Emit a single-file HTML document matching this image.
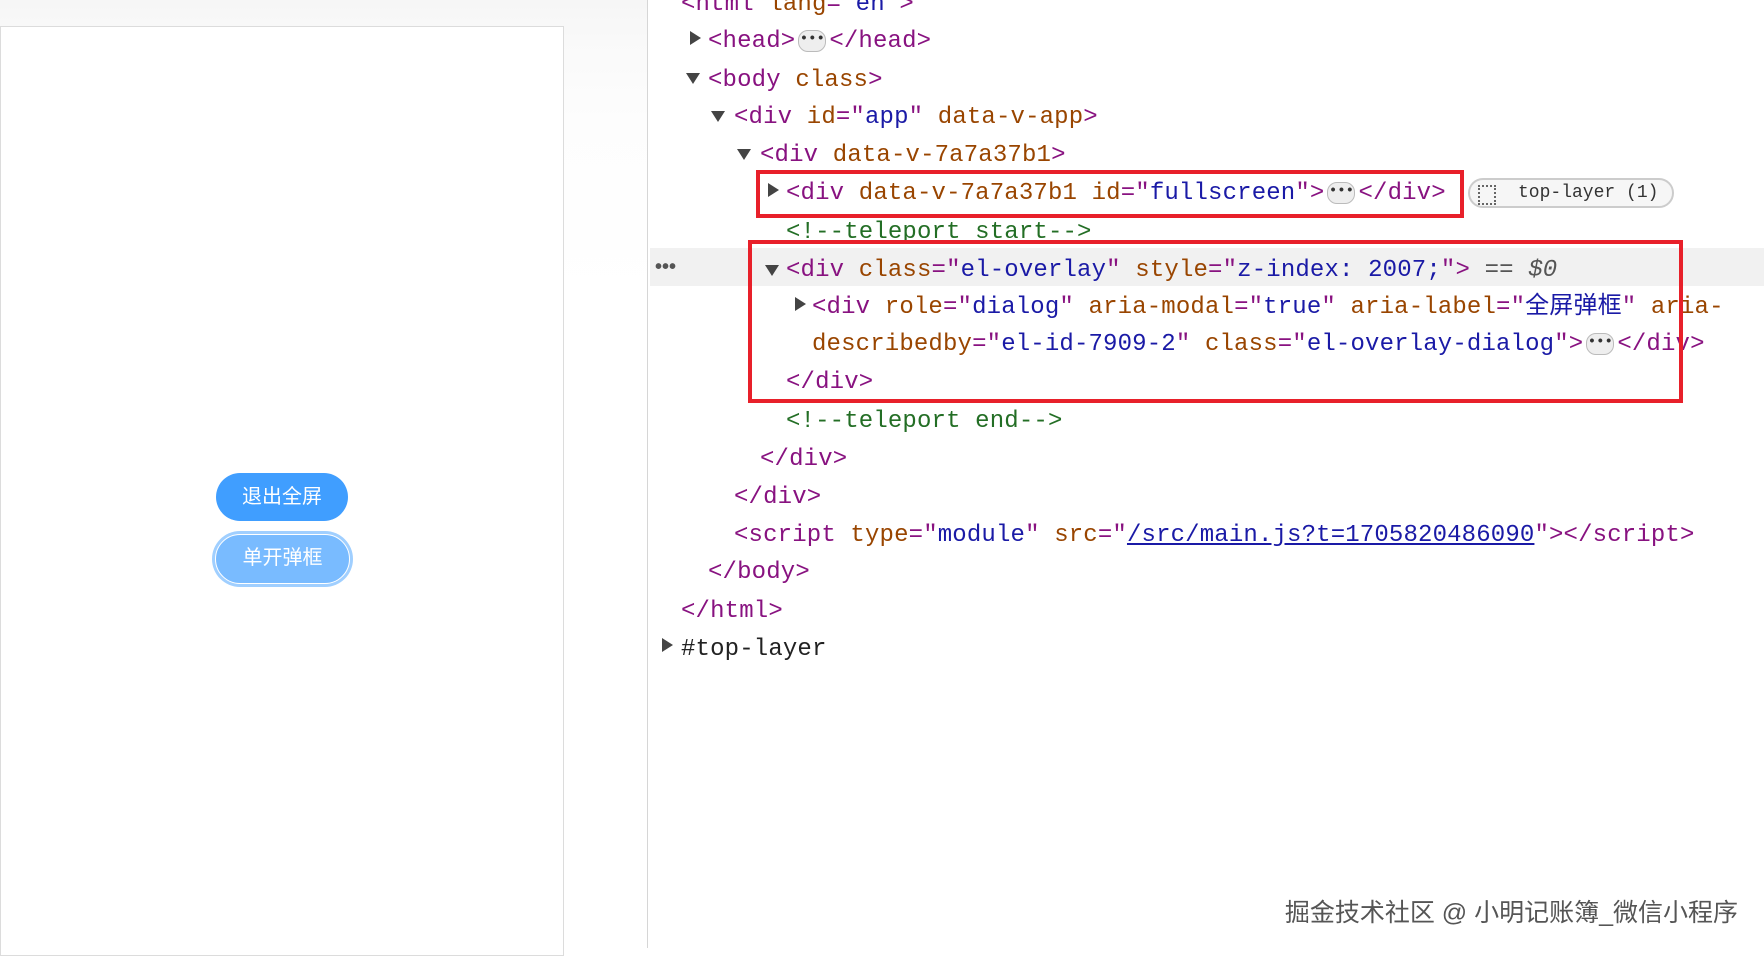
<!DOCTYPE html>
<html><head><meta charset="utf-8"><style>
body{margin:0;width:1764px;height:948px;overflow:hidden;background:#fff;position:relative;font-family:"Liberation Mono",monospace}
.lp{position:absolute;left:0;top:0;width:647px;height:948px;background:linear-gradient(#f6f6f6 0,#f9f9f9 40px,#fdfdfd 120px,#fff 300px)}
.box{position:absolute;left:0;top:26px;width:564px;height:930px;background:#fff;border:1px solid #dcdcdc;box-sizing:border-box}
.div{position:absolute;left:647px;top:0;width:1px;height:948px;background:#d6d6d6}
.b1{position:absolute;left:216px;top:473px;width:132px;height:48px;border-radius:24px;background:#409eff;color:#fff;font:20px "Liberation Sans","Noto Sans CJK SC",sans-serif;text-align:center;line-height:48px}
.b2{position:absolute;left:212px;top:531px;width:141px;height:56px;border-radius:28px;background:#a0cfff;}
.b2 i{position:absolute;left:3px;top:3px;right:3px;bottom:3px;border-radius:25px;background:#79bbff;border:1.5px solid #fff;color:#fff;font:normal 20px "Liberation Sans","Noto Sans CJK SC",sans-serif;text-align:center;line-height:47px}
.l{position:absolute;height:38px;line-height:38px;font-size:24px;white-space:pre;color:#881280;margin-top:3px;letter-spacing:0.15px}
.a{color:#994500}.v{color:#1a1aa6}.c{color:#236e25}.g{color:#555}
.t{position:absolute;width:0;height:0;margin-top:3px}
.tr{border-left:11px solid #444;border-top:7px solid transparent;border-bottom:7px solid transparent}
.td{border-top:11px solid #444;border-left:7px solid transparent;border-right:7px solid transparent}
.dots{display:inline-block;width:26px;height:20px;border:1px solid #bbb;border-radius:10px;background:#eee;vertical-align:middle;font-size:14px;line-height:16px;text-align:center;color:#333;font-weight:bold;margin:0 3px;letter-spacing:0}
.hl{position:absolute;left:650px;top:248px;width:1114px;height:38px;background:#f1f1f1}
.rb{position:absolute;border:4px solid #e8202a;box-sizing:border-box}
.cjk{font-family:"Liberation Mono","Noto Sans CJK SC",monospace}
</style></head><body>
<div class="lp"></div><div class="box"></div><div class="div"></div>
<div class="b1">退出全屏</div>
<div class="b2"><i>单开弹框</i></div>
<div class="hl"></div>
<div style="position:absolute;left:655px;top:250px;line-height:34px;font-size:20px;color:#555;font-family:'Liberation Sans',sans-serif;font-weight:bold">•••</div>

<div class="l" style="left:681px;top:-17px">&lt;html <span class="a">lang</span>="<span class="v">en</span>"&gt;</div>
<div class="t tr" style="left:690px;top:28px"></div>
<div class="l" style="left:708px;top:20px">&lt;head&gt;<span class="dots">•••</span>&lt;/head&gt;</div>
<div class="t td" style="left:686px;top:70px"></div>
<div class="l" style="left:708px;top:59px">&lt;body <span class="a">class</span>&gt;</div>
<div class="t td" style="left:711px;top:108px"></div>
<div class="l" style="left:734px;top:96px">&lt;div <span class="a">id</span>="<span class="v">app</span>" <span class="a">data-v-app</span>&gt;</div>
<div class="t td" style="left:737px;top:146px"></div>
<div class="l" style="left:760px;top:134px">&lt;div <span class="a">data-v-7a7a37b1</span>&gt;</div>
<div class="t tr" style="left:768px;top:180px"></div>
<div class="l" style="left:786px;top:172px">&lt;div <span class="a">data-v-7a7a37b1 id</span>="<span class="v">fullscreen</span>"&gt;<span class="dots">•••</span>&lt;/div&gt;</div>
<div style="position:absolute;left:1468px;top:178px;width:206px;height:30px;border:2px solid #ccc;border-radius:16px;box-sizing:border-box;background:#f6f6f6;font-size:18px;line-height:26px;color:#333;padding-left:48px">top-layer (1)</div>
<div style="position:absolute;left:1478px;top:185px;width:14px;height:16px;border:2px dotted #666"></div>
<div class="l c" style="left:786px;top:211px">&lt;!--teleport start--&gt;</div>
<div class="t td" style="left:765px;top:262px"></div>
<div class="l" style="left:786px;top:249px">&lt;div <span class="a">class</span>="<span class="v">el-overlay</span>" <span class="a">style</span>="<span class="v">z-index: 2007;</span>"&gt; <span class="g">== <i>$0</i></span></div>
<div class="t tr" style="left:795px;top:294px"></div>
<div class="l cjk" style="left:812px;top:286px">&lt;div <span class="a">role</span>="<span class="v">dialog</span>" <span class="a">aria-modal</span>="<span class="v">true</span>" <span class="a">aria-label</span>="<span class="v">全屏弹框</span>" <span class="a">aria-</span></div>
<div class="l" style="left:812px;top:323px"><span class="a">describedby</span>="<span class="v">el-id-7909-2</span>" <span class="a">class</span>="<span class="v">el-overlay-dialog</span>"&gt;<span class="dots">•••</span>&lt;/div&gt;</div>
<div class="l" style="left:786px;top:361px">&lt;/div&gt;</div>
<div class="l c" style="left:786px;top:400px">&lt;!--teleport end--&gt;</div>
<div class="l" style="left:760px;top:438px">&lt;/div&gt;</div>
<div class="l" style="left:734px;top:476px">&lt;/div&gt;</div>
<div class="l" style="left:734px;top:514px">&lt;script <span class="a">type</span>="<span class="v">module</span>" <span class="a">src</span>="<span style="color:#1a1aa6;text-decoration:underline">/src/main.js?t=1705820486090</span>"&gt;&lt;/script&gt;</div>
<div class="l" style="left:708px;top:551px">&lt;/body&gt;</div>
<div class="l" style="left:681px;top:590px">&lt;/html&gt;</div>
<div class="t tr" style="left:662px;top:635px"></div>
<div class="l" style="left:681px;top:628px;color:#222">#top-layer</div>
<div class="rb" style="left:756px;top:170px;width:708px;height:48px"></div>
<div class="rb" style="left:748px;top:240px;width:935px;height:163px"></div>
<div style="position:absolute;right:26px;top:893px;font:25px 'Liberation Sans','Noto Sans CJK SC',sans-serif;color:#555;white-space:nowrap">掘金技术社区 @ 小明记账簿_微信小程序</div>
</body></html>
